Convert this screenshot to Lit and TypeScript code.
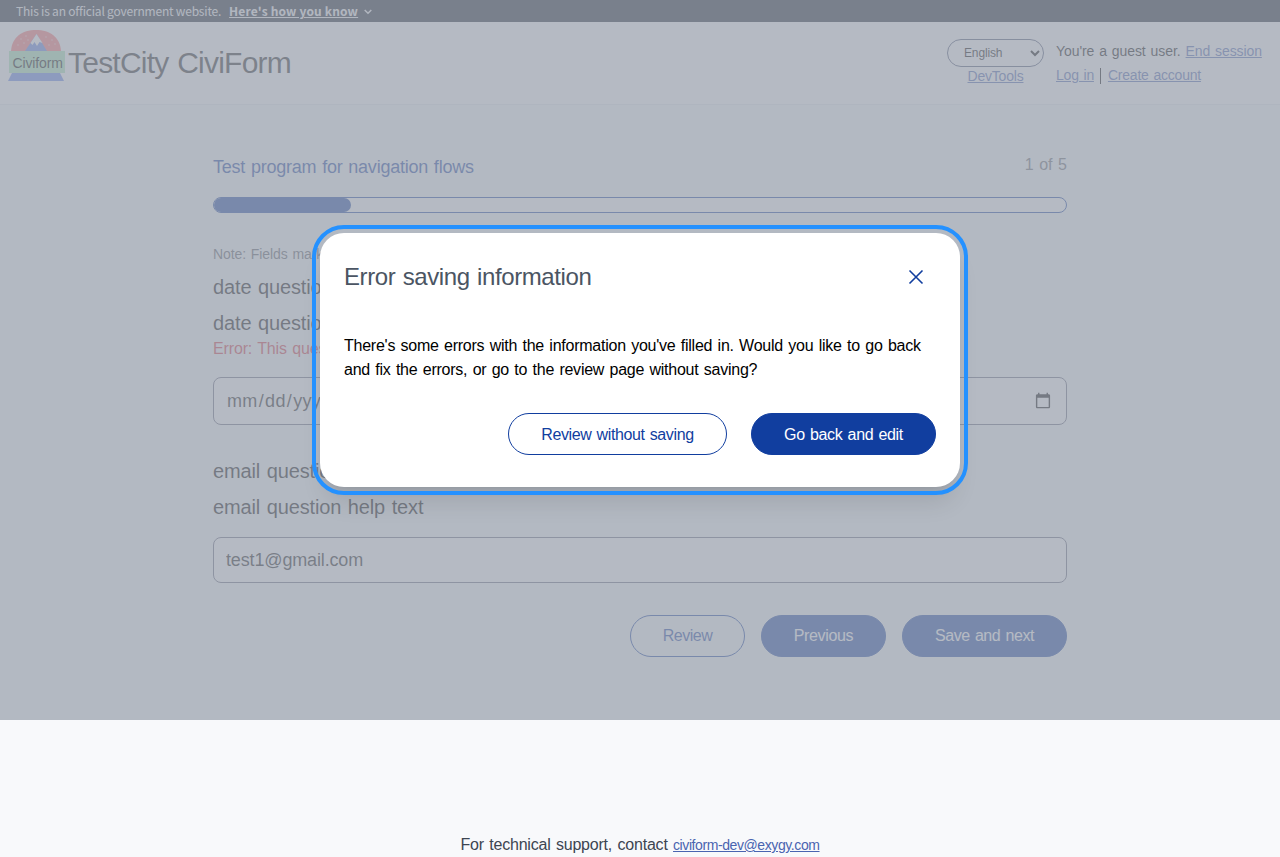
import {LitElement, html, css, svg} from "lit";
import {customElement} from "lit/decorators.js";

const logo = svg`
  <path d="M3 22C4 8 14 1 28 1s24 7 25 21z" fill="#ff7676"/>
  <path d="M17 22L28.500 5 39 22z" fill="#5f84e6"/>
  <path d="M22.500 14L28.500 5l6 9-3-1-2.500 4-2.500-4-2 3z" fill="#fff"/>
  <g fill="#ffc4c4"><circle cx="13" cy="10" r=".7"/><circle cx="18" cy="7" r=".7"/><circle cx="10" cy="16" r=".7"/><circle cx="16" cy="14" r=".7"/><circle cx="20" cy="11" r=".7"/><circle cx="38" cy="8" r=".7"/><circle cx="44" cy="11" r=".7"/><circle cx="41" cy="16" r=".7"/><circle cx="47" cy="15" r=".7"/></g>
  <rect x="1" y="22" width="56" height="22" fill="#a9e8b6"/>
  <path d="M4 44h48l4 8H0z" fill="#6084ea"/>
  <text x="4.500" y="38.500" font-size="14" textLength="50.500" fill="#000">Civiform</text>`;

@customElement("app-root")
export class AppRoot extends LitElement {
  static styles = css`
    :host { display: block; position: relative; height: 857px; overflow: hidden; background: #f8f9fb; font-family: "Liberation Sans", Arial, sans-serif; font-size: 16px; line-height: 24px; word-spacing: .07em; color: #000; }
    * { box-sizing: border-box; }
    a { color: #4a64b0; text-decoration: underline; }
    .banner { display: flex; align-items: center; height: 22px; padding-left: 16px; background: #111827; color: #f0f0f0; font: 12px/22px "Noto Sans CJK SC", sans-serif; letter-spacing: -.2px; word-spacing: 0; }
    .banner b { margin-left: 8px; text-decoration: underline; letter-spacing: .16px; }
    .banner svg { margin: 2px 0 0 6px; }
    header { display: flex; height: 83px; padding: 7px 20px 0 8px; background: #fff; border-bottom: 1px solid #e8eaee; font-size: 14px; }
    .logo { display: block; width: 58px; height: 53px; }
    h1 { margin: 14px 0 0 2px; font-size: 30px; line-height: 40px; font-weight: 400; letter-spacing: -.77px; color: #222; flex: 1; }
    .lang { display: flex; flex-direction: column; align-items: center; width: 97px; margin: 10px 12px 0 0; letter-spacing: -.2px; }
    select { width: 97px; height: 28px; padding: 0 0 0 12px; border: 1px solid #4a5472; border-radius: 14px; background: #fff; font: 12px "Liberation Sans"; letter-spacing: -.15px; color: #000; }
    .lang a { line-height: 19px; }
    .account { width: 204px; margin-top: 10px; white-space: nowrap; letter-spacing: -.22px; }
    .account div { display: flex; }
    .account .guest { letter-spacing: -.08px; margin-right: 4px; }
    .account .guest + a { letter-spacing: -.1px; margin-left: 1px; }
    .sep { width: 1px; height: 16px; margin: 5px 7px 0 6px; background: #000; }
    main { width: 854px; margin: 48px auto 0; }
    .top { display: flex; justify-content: space-between; height: 28px; }
    h2 { margin: 0; font-size: 18px; line-height: 28px; font-weight: 400; letter-spacing: -.24px; color: #113e9f; }
    .count { color: #64676e; letter-spacing: 0; }
    .bar { height: 16px; margin-top: 16px; border: 1px solid #113e9f; border-radius: 8px; background: #fff; overflow: hidden; }
    .fill { height: 100%; border-radius: 0 8px 8px 0; background: #113e9f; }
    .note { margin-top: 31px; font-size: 14px; line-height: 20px; letter-spacing: -.1px; color: #555962; }
    .q { font-size: 20px; line-height: 28px; margin-top: 8px; letter-spacing: -.13px; color: #000; }
    .note + .q { margin-top: 9px; }
    .error { color: #d3333f; letter-spacing: -.15px; }
    input { display: block; width: 100%; height: 46px; margin-top: 16px; padding: 0 12px; border: 1px solid #65697b; border-radius: 8px; background: #fff; font: 18px "Liberation Sans"; letter-spacing: -.15px; color: #111; }
    input.date { height: 48px; letter-spacing: .35px; }
    .date + .q { margin-top: 32px; }
    .actions { display: flex; justify-content: flex-end; gap: 16px; margin-top: 32px; }
    button { height: 42px; padding: 0; border: 1px solid #113e9f; border-radius: 21px; background: #113e9f; color: #fff; font: 16px "Liberation Sans"; word-spacing: .07em; letter-spacing: -.35px; }
    .outline { background: transparent; color: #113e9f; }
    .review { width: 115px; letter-spacing: -.5px; }
    .previous { width: 125px; }
    .next { width: 165px; letter-spacing: -.42px; }
    footer { margin-top: 176px; text-align: center; color: #3d4551; letter-spacing: -.2px; }
    footer a { font-size: 14px; letter-spacing: -.41px; }
    .overlay { position: absolute; inset: 0 0 auto; height: 720px; display: flex; align-items: center; justify-content: center; background: rgba(156, 163, 175, .75); }
    .modal { width: 640px; height: 254px; padding: 24px; border-radius: 24px; background: #fff; outline: 4px solid #2491ff; outline-offset: 4px; box-shadow: 0 20px 25px -5px rgba(0, 0, 0, .1), 0 8px 10px -6px rgba(0, 0, 0, .1); }
    .head { display: flex; justify-content: space-between; align-items: center; height: 40px; padding-right: 10px; }
    h3 { margin: 0; font-size: 24px; font-weight: 400; letter-spacing: -.4px; color: #4b5563; }
    .modal p { margin: 37px 0 0; letter-spacing: -.24px; }
    .choices { display: flex; justify-content: flex-end; gap: 24px; margin-top: 31px; }
    .choices button { padding-top: 1px; }
    .skip { width: 219px; letter-spacing: -.39px; }
    .back { width: 185px; letter-spacing: -.34px; }
  `;

  render() {
    return html`
      <div class="banner">This is an official government website.<b>Here's how you know</b>
        <svg width="8" height="6" viewBox="0 0 8 6"><path d="M.7 1L4 4.300 7.300 1" fill="none" stroke="#f0f0f0" stroke-width="1.500"/></svg>
      </div>
      <header>
        <svg class="logo" viewBox="0 0 58 53">${logo}</svg>
        <h1>TestCity CiviForm</h1>
        <div class="lang"><select><option>English</option></select><a>DevTools</a></div>
        <div class="account">
          <div><span class="guest">You're a guest user.</span><a>End session</a></div>
          <div><a>Log in</a><span class="sep"></span><a>Create account</a></div>
        </div>
      </header>
      <main>
        <div class="top"><h2>Test program for navigation flows</h2><span class="count">1 of 5</span></div>
        <div class="bar"><div class="fill" style="width:${(137 / 852) * 100}%"></div></div>
        <div class="note">Note: Fields marked with a * are required.</div>
        <div class="q">date question text</div>
        <div class="q">date question help text</div>
        <div class="error">Error: This question is required.</div>
        <input class="date" type="date">
        <div class="q">email question text</div>
        <div class="q">email question help text</div>
        <input type="text" .value=${"test1@gmail.com"}>
        <div class="actions">
          <button class="outline review">Review</button>
          <button class="previous">Previous</button>
          <button class="next">Save and next</button>
        </div>
      </main>
      <footer>For technical support, contact <a>civiform-dev@exygy.com</a></footer>
      <div class="overlay">
        <div class="modal">
          <div class="head">
            <h3>Error saving information</h3>
            <svg width="20" height="20" viewBox="0 0 20 20"><path d="M3.500 3.500l13 13M16.500 3.500l-13 13" stroke="#113e9f" stroke-width="1.600"/></svg>
          </div>
          <p>There's some errors with the information you've filled in. Would you like to go back<br>and fix the errors, or go to the review page without saving?</p>
          <div class="choices">
            <button class="outline skip">Review without saving</button>
            <button class="back">Go back and edit</button>
          </div>
        </div>
      </div>`;
  }
}
